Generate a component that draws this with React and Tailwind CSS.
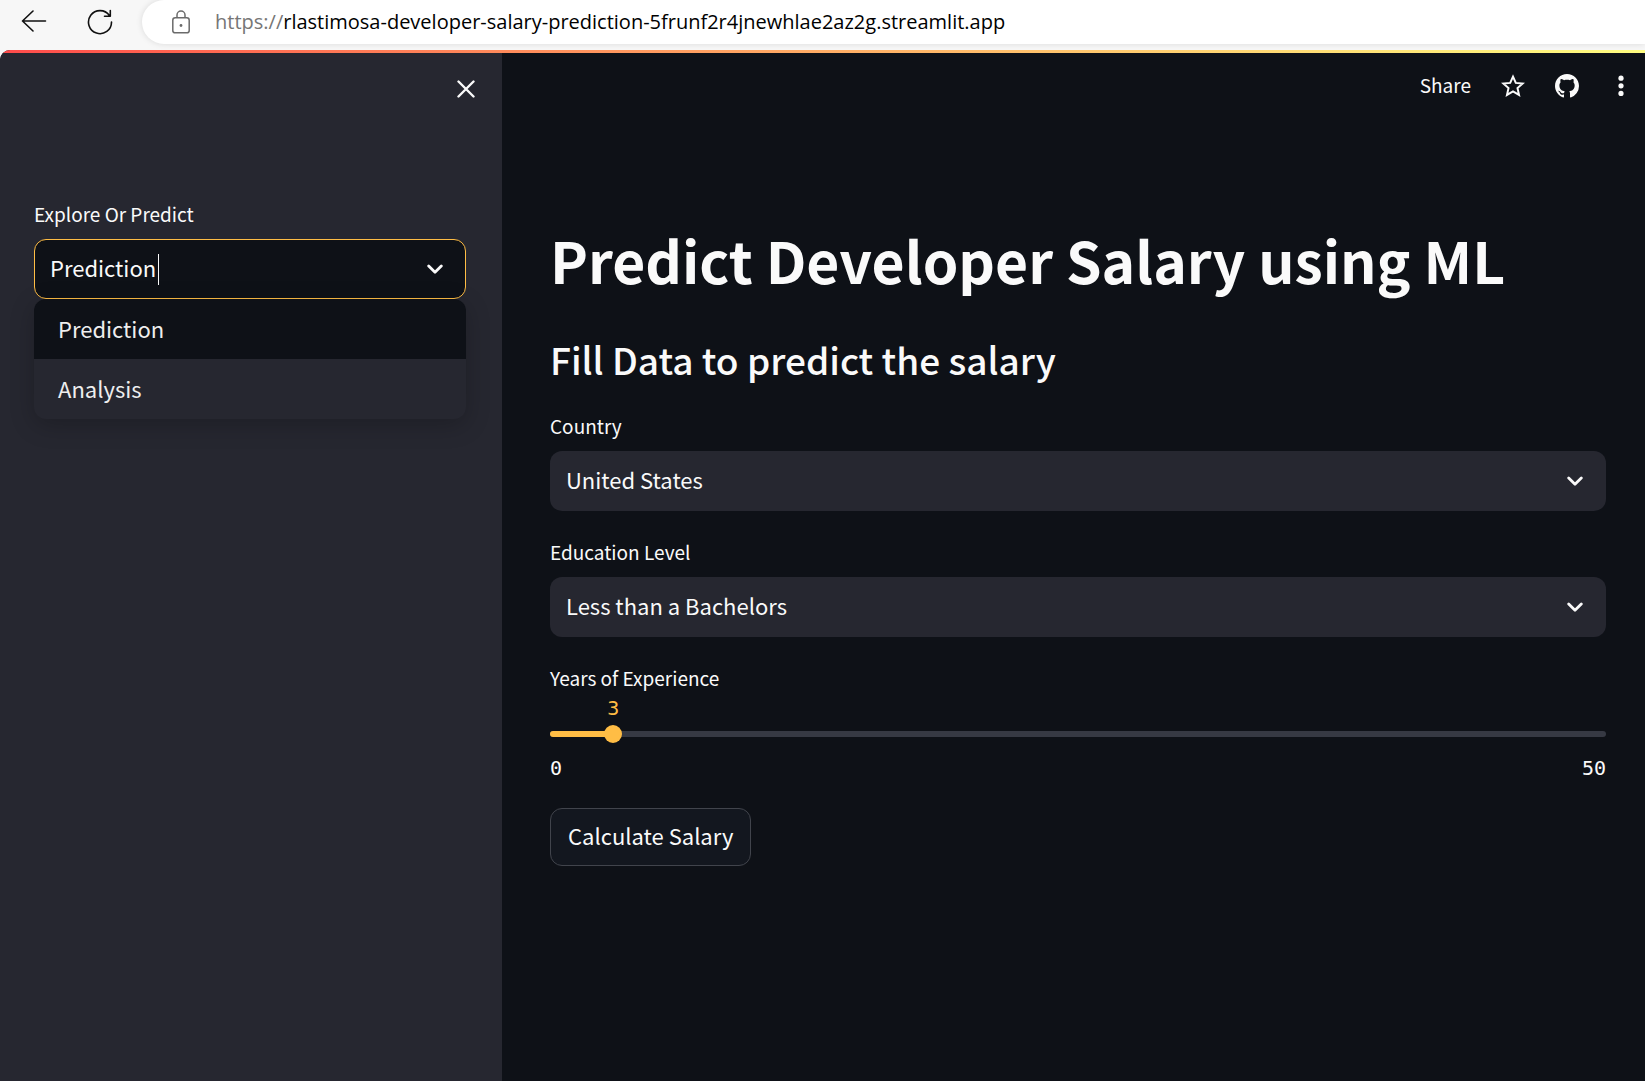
import { useState } from "react";

function Chevron() {
  return (
    <svg
      className="pointer-events-none h-[10px] w-4"
      viewBox="0 0 16 10"
      fill="none"
      stroke="#fafafa"
      strokeWidth="2.8"
      strokeLinecap="round"
      strokeLinejoin="round"
      aria-hidden="true"
    >
      <path d="M1.7 2 8 8.2 14.3 2" />
    </svg>
  );
}

function BrowserBar() {
  return (
    <div className="flex h-[50px] items-start overflow-hidden bg-[#f7f7f7]">
      <button aria-label="Back" className="ml-[21px] flex h-[41px] w-[26px] items-center justify-center">
        <svg className="h-[22px] w-[26px]" viewBox="0 0 26 22" fill="none" stroke="#111" strokeWidth="1.6" strokeLinecap="round" strokeLinejoin="round">
          <path d="M24.5 11H1.5M12 1 1.5 11 12 21" />
        </svg>
      </button>
      <button aria-label="Refresh" className="ml-10 flex h-[43px] w-[26px] items-center justify-center">
        <svg className="size-[26px]" viewBox="0 0 26 26" fill="none" stroke="#111" strokeWidth="1.6" strokeLinecap="round" strokeLinejoin="round">
          <path d="M24.5 13A11.5 11.5 0 1 1 22.4 6.5M23.3 1.5V7.2H17.5" />
        </svg>
      </button>
      <div className="ml-[29px] flex h-11 flex-1 items-center rounded-l-full bg-white pl-[30px] shadow-[0_0_6px_rgba(0,0,0,0.12)]">
        <svg className="h-6 w-[18px] shrink-0" viewBox="0 0 18 24" fill="none" stroke="#6b6b6b" strokeWidth="1.5" aria-hidden="true">
          <rect x="0.8" y="7.8" width="16.4" height="15" rx="2.4" />
          <path d="M5 7.8V5a4 4 0 0 1 8 0v2.8" />
          <circle cx="9" cy="15.5" r="1.4" fill="#6b6b6b" stroke="none" />
        </svg>
        <div className="ml-[25px] whitespace-nowrap font-['Open_Sans','Noto_Sans',sans-serif] text-[20px] leading-[42px] text-black">
          <span className="text-[#767676]">https://</span>rlastimosa-developer-salary-prediction-5frunf2r4jnewhlae2az2g.streamlit.app
        </div>
      </div>
    </div>
  );
}

function Sidebar() {
  const [value, setValue] = useState("Prediction");
  return (
    <aside className="w-[502px] shrink-0 bg-[#262730]">
      <div className="flex h-[72px] items-center justify-end pr-[27px]">
        <button aria-label="Close sidebar">
          <svg className="size-[18px]" viewBox="0 0 18 18" fill="none" stroke="#fafafa" strokeWidth="2.4" strokeLinecap="round">
            <path d="M1.5 1.5 16.5 16.5M16.5 1.5 1.5 16.5" />
          </svg>
        </button>
      </div>
      <div className="pl-[34px] pr-9 pt-[74px]">
        <label htmlFor="page" className="mb-2.5 block text-[19px] leading-[30px]">
          Explore Or Predict
        </label>
        <div className="relative">
          <div className="flex h-[60px] items-center rounded-xl border border-[#ffbd45] bg-[#0e1117] pl-[15px] pr-[22px]">
            <input
              id="page"
              role="combobox"
              aria-expanded="true"
              aria-controls="page-options"
              value={value}
              onChange={(e) => setValue(e.target.value)}
              className="bg-transparent pb-1 text-[22px] leading-8 outline-none [field-sizing:content]"
            />
            <span className="ml-0.5 h-[31px] w-px bg-[#fafafa]" />
            <span className="ml-auto">
              <Chevron />
            </span>
          </div>
          <ul
            id="page-options"
            role="listbox"
            className="absolute inset-x-0 top-full overflow-hidden rounded-xl bg-[#262730] text-[22px] leading-[58px] text-[#eeeeee] shadow-[0_6px_24px_rgba(0,0,0,0.22)]"
          >
            <li role="option" aria-selected="true" className="bg-[#0e1117] px-6 pb-0.5">
              Prediction
            </li>
            <li role="option" aria-selected="false" className="px-6 pb-0.5">
              Analysis
            </li>
          </ul>
        </div>
      </div>
    </aside>
  );
}

function SelectField({ id, label, options }) {
  return (
    <div className="mb-[26px]">
      <label htmlFor={id} className="mb-2.5 block text-[19px] leading-[30px]">
        {label}
      </label>
      <div className="relative">
        <select
          id={id}
          className="block h-[60px] w-full appearance-none rounded-xl bg-[#262730] pb-[3px] pl-4 pr-14 text-[22px] text-[#fafafa] outline-none"
        >
          {options.map((o) => (
            <option key={o}>{o}</option>
          ))}
        </select>
        <span className="pointer-events-none absolute inset-y-0 right-[23px] flex items-center">
          <Chevron />
        </span>
      </div>
    </div>
  );
}

function ExperienceSlider() {
  const [years, setYears] = useState(3);
  const max = 50;
  const pct = (years / max) * 100 + "%";
  return (
    <div>
      <label htmlFor="years" className="block text-[19px] leading-[30px]">
        Years of Experience
      </label>
      <div className="flex h-[29px] font-['DejaVu_Sans_Mono',monospace] text-[20px] leading-[30px] text-[#ffbd45]">
        <span style={{ width: pct }} />
        <output htmlFor="years" className="-ml-1.5">
          {years}
        </output>
      </div>
      <div className="relative flex h-6 items-center">
        <div className="h-1.5 w-full overflow-hidden rounded-full bg-[#363943]">
          <div className="h-full bg-[#ffbd45]" style={{ width: pct }} />
        </div>
        <input
          id="years"
          type="range"
          min="0"
          max={max}
          value={years}
          onChange={(e) => setYears(Number(e.target.value))}
          className="absolute inset-y-0 -left-[9px] w-[calc(100%+18px)] appearance-none bg-transparent outline-none [&::-webkit-slider-thumb]:size-[18px] [&::-webkit-slider-thumb]:appearance-none [&::-webkit-slider-thumb]:rounded-full [&::-webkit-slider-thumb]:bg-[#ffbd45]"
        />
      </div>
      <div className="mt-2 flex justify-between font-['DejaVu_Sans_Mono',monospace] text-[20px] leading-7">
        <span>0</span>
        <span>{max}</span>
      </div>
    </div>
  );
}

function Toolbar() {
  return (
    <div className="flex h-[66px] items-center justify-end pr-[21px]">
      <button className="pb-0.5 text-[19px] leading-8">Share</button>
      <button aria-label="Favorite" className="ml-[30px]">
        <svg className="size-6" viewBox="0 0 24 24" fill="none" stroke="#fafafa" strokeWidth="2" strokeLinejoin="miter" strokeMiterlimit="10">
          <path d="M12 2.6 14.8 8.9 21.7 9.5 16.5 14.1 18 20.9 12 17.3 6 20.9 7.5 14.1 2.3 9.5 9.2 8.9Z" />
        </svg>
      </button>
      <button aria-label="View source on GitHub" className="ml-[30px]">
        <svg className="size-6" viewBox="0 0 16 16" fill="#fafafa">
          <path d="M8 0C3.58 0 0 3.58 0 8c0 3.54 2.29 6.53 5.47 7.59.4.07.55-.17.55-.38 0-.19-.01-.82-.01-1.49-2.01.37-2.53-.49-2.69-.94-.09-.23-.48-.94-.82-1.13-.28-.15-.68-.52-.01-.53.63-.01 1.08.58 1.23.82.72 1.21 1.87.87 2.33.66.07-.52.28-.87.51-1.07-1.78-.2-3.64-.89-3.64-3.95 0-.87.31-1.59.82-2.15-.08-.2-.36-1.02.08-2.12 0 0 .67-.21 2.2.82.64-.18 1.32-.27 2-.27s1.36.09 2 .27c1.53-1.04 2.2-.82 2.2-.82.44 1.1.16 1.92.08 2.12.51.56.82 1.27.82 2.15 0 3.07-1.87 3.75-3.65 3.95.29.25.54.73.54 1.48 0 1.07-.01 1.93-.01 2.2 0 .21.15.46.55.38A8.01 8.01 0 0 0 16 8c0-4.42-3.58-8-8-8Z" />
        </svg>
      </button>
      <button aria-label="Main menu" className="ml-[39px]">
        <svg className="h-[22px] w-[6px]" viewBox="0 0 6 22" fill="#fafafa">
          <circle cx="3" cy="3.2" r="2.6" />
          <circle cx="3" cy="10.8" r="2.6" />
          <circle cx="3" cy="18.4" r="2.6" />
        </svg>
      </button>
    </div>
  );
}

export default function App() {
  return (
    <div className="flex min-h-screen flex-col bg-[#f7f7f7] font-['Noto_Sans_CJK_SC','Open_Sans',sans-serif] text-[#fafafa]">
      <BrowserBar />
      <div className="flex flex-1 flex-col overflow-hidden rounded-tl-[10px] bg-[#0e1117]">
        <div className="h-[3px] bg-linear-to-r from-[#ff4b4b] to-[#fffd80]" />
        <div className="flex flex-1">
          <Sidebar />
          <main className="min-w-0 flex-1">
            <Toolbar />
            <div className="pl-12 pr-[39px] pt-[106px]">
              <h1 className="text-[57px] font-bold leading-[68px]">Predict Developer Salary using ML</h1>
              <h2 className="mb-[29px] mt-[43px] text-[37px] font-medium leading-[46px]">
                Fill Data to predict the salary
              </h2>
              <SelectField
                id="country"
                label="Country"
                options={["United States", "India", "United Kingdom", "Germany", "Canada"]}
              />
              <SelectField
                id="education"
                label="Education Level"
                options={["Less than a Bachelors", "Bachelor’s degree", "Master’s degree", "Post grad"]}
              />
              <ExperienceSlider />
              <button className="mt-[26px] h-[58px] rounded-xl border border-[#41444c] bg-[#13171f] px-[17px] pb-1 text-[22px] leading-8">
                Calculate Salary
              </button>
            </div>
          </main>
        </div>
      </div>
    </div>
  );
}
